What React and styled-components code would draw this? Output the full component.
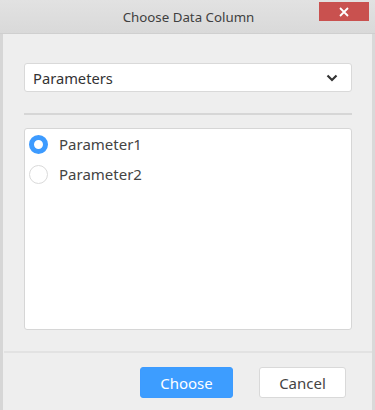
import React, { useState } from "react";
import styled, { createGlobalStyle } from "styled-components";

const Global = createGlobalStyle`
  html, body { margin: 0; padding: 0; background: #eeeeee; }
  body { font-family: "Noto Sans", "Open Sans", "Liberation Sans", sans-serif; }
  * { box-sizing: border-box; }
`;

const Window = styled.div`
  width: 375px;
  height: 410px;
  display: flex;
  flex-direction: column;
  background: #eeeeee;
  border-left: 3px solid #d6d6d6;
  border-right: 3px solid #d9d9d9;
`;

const TitleBar = styled.div`
  height: 34px;
  flex: none;
  display: flex;
  align-items: center;
  justify-content: center;
  position: relative;
  background: linear-gradient(#e2e2e2, #d9d9d9);
  border-bottom: 1px solid #cfcfcf;
  margin: 0 -3px;
`;

const Title = styled.div`
  font-size: 13.3px;
  color: #404040;
  padding-left: 2px;
`;

const CloseButton = styled.div`
  position: absolute;
  top: 2px;
  right: 6px;
  width: 50px;
  height: 19px;
  background: #c9514f;
  display: flex;
  align-items: center;
  justify-content: center;
`;

const Body = styled.div`
  flex: 1;
  display: flex;
  flex-direction: column;
  padding: 29px 20px 0 21px;
`;

const Select = styled.div`
  height: 29px;
  background: #fff;
  border: 1px solid #d9d9d9;
  border-radius: 3px;
  display: flex;
  align-items: center;
  justify-content: space-between;
  padding: 0 13px 0 8px;
  font-size: 14.7px;
  color: #333;
`;

const Divider = styled.div`
  height: 2px;
  background: #d6d6d6;
  margin: ${(p) => p.$m};
`;

const ListBox = styled.div`
  height: 202px;
  background: #fff;
  border: 1px solid #d6d6d6;
  border-radius: 3px;
  padding: 5px 0 0 4px;
  display: flex;
  flex-direction: column;
  gap: 10px;
`;

const Option = styled.label`
  display: flex;
  align-items: center;
  gap: 11px;
  font-size: 15px;
  color: #444;
  height: 20px;
  cursor: pointer;
`;

const Radio = styled.span`
  width: 19px;
  height: 19px;
  border-radius: 50%;
  background: #fff;
  border: ${(p) => (p.$checked ? "5px solid #3d9bff" : "1.5px solid #dadada")};
  flex: none;
`;

const Footer = styled.div`
  flex: none;
  border-top: 2px solid #e2e2e2;
  display: flex;
  justify-content: flex-end;
  align-items: center;
  gap: 26px;
  padding: 14px 26px 12px 0;
  margin: 19px 0 0 1px;
`;

const Button = styled.button`
  height: 31px;
  width: ${(p) => p.$w}px;
  border-radius: 3px;
  font-family: inherit;
  font-size: 15px;
  border: 1px solid ${(p) => (p.$primary ? "#3d9bff" : "#d9d9d9")};
  background: ${(p) => (p.$primary ? "#3d9dff" : "#ffffff")};
  color: ${(p) => (p.$primary ? "#ffffff" : "#444")};
  padding: 0;
`;

export default function App() {
  const [sel, setSel] = useState(0);
  const items = ["Parameter1", "Parameter2"];
  return (
    <>
      <Global />
      <Window>
        <TitleBar>
          <Title>Choose Data Column</Title>
          <CloseButton>
            <svg width="10" height="10" viewBox="0 0 10 10">
              <path d="M1 1L9 9M9 1L1 9" stroke="#fff" strokeWidth="1.8" />
            </svg>
          </CloseButton>
        </TitleBar>
        <Body>
          <Select>
            <span>Parameters</span>
            <svg width="12" height="8" viewBox="0 0 12 8">
              <path d="M1.5 1.5L6 6L10.5 1.5" stroke="#333" strokeWidth="2.2" fill="none" />
            </svg>
          </Select>
          <Divider $m="21px 0 13px" />
          <ListBox>
            {items.map((t, i) => (
              <Option key={t} onClick={() => setSel(i)}>
                <Radio $checked={sel === i} />
                {t}
              </Option>
            ))}
          </ListBox>
        </Body>
        <Footer>
          <Button $primary $w={93}>Choose</Button>
          <Button $w={87}>Cancel</Button>
        </Footer>
      </Window>
    </>
  );
}
